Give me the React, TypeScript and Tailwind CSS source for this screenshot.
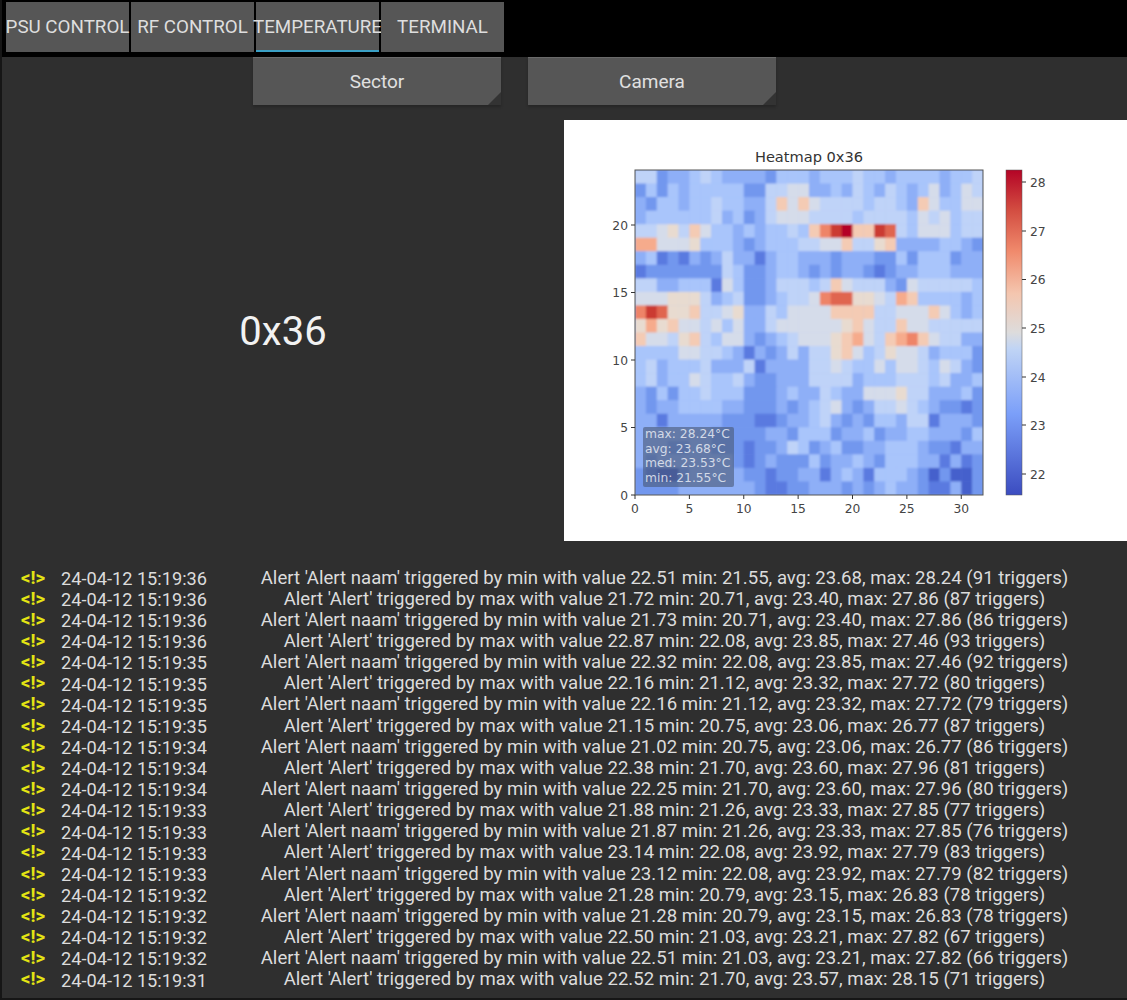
const roboto = 'font-[Roboto,sans-serif]'

const tabs = ['PSU CONTROL', 'RF CONTROL', 'TEMPERATURE', 'TERMINAL']

const logs = [
  ['24-04-12 15:19:36', "Alert 'Alert naam' triggered by min with value 22.51 min: 21.55, avg: 23.68, max: 28.24 (91 triggers)"],
  ['24-04-12 15:19:36', "Alert 'Alert' triggered by max with value 21.72 min: 20.71, avg: 23.40, max: 27.86 (87 triggers)"],
  ['24-04-12 15:19:36', "Alert 'Alert naam' triggered by min with value 21.73 min: 20.71, avg: 23.40, max: 27.86 (86 triggers)"],
  ['24-04-12 15:19:36', "Alert 'Alert' triggered by max with value 22.87 min: 22.08, avg: 23.85, max: 27.46 (93 triggers)"],
  ['24-04-12 15:19:35', "Alert 'Alert naam' triggered by min with value 22.32 min: 22.08, avg: 23.85, max: 27.46 (92 triggers)"],
  ['24-04-12 15:19:35', "Alert 'Alert' triggered by max with value 22.16 min: 21.12, avg: 23.32, max: 27.72 (80 triggers)"],
  ['24-04-12 15:19:35', "Alert 'Alert naam' triggered by min with value 22.16 min: 21.12, avg: 23.32, max: 27.72 (79 triggers)"],
  ['24-04-12 15:19:35', "Alert 'Alert' triggered by max with value 21.15 min: 20.75, avg: 23.06, max: 26.77 (87 triggers)"],
  ['24-04-12 15:19:34', "Alert 'Alert naam' triggered by min with value 21.02 min: 20.75, avg: 23.06, max: 26.77 (86 triggers)"],
  ['24-04-12 15:19:34', "Alert 'Alert' triggered by max with value 22.38 min: 21.70, avg: 23.60, max: 27.96 (81 triggers)"],
  ['24-04-12 15:19:34', "Alert 'Alert naam' triggered by min with value 22.25 min: 21.70, avg: 23.60, max: 27.96 (80 triggers)"],
  ['24-04-12 15:19:33', "Alert 'Alert' triggered by max with value 21.88 min: 21.26, avg: 23.33, max: 27.85 (77 triggers)"],
  ['24-04-12 15:19:33', "Alert 'Alert naam' triggered by min with value 21.87 min: 21.26, avg: 23.33, max: 27.85 (76 triggers)"],
  ['24-04-12 15:19:33', "Alert 'Alert' triggered by max with value 23.14 min: 22.08, avg: 23.92, max: 27.79 (83 triggers)"],
  ['24-04-12 15:19:33', "Alert 'Alert naam' triggered by min with value 23.12 min: 22.08, avg: 23.92, max: 27.79 (82 triggers)"],
  ['24-04-12 15:19:32', "Alert 'Alert' triggered by max with value 21.28 min: 20.79, avg: 23.15, max: 26.83 (78 triggers)"],
  ['24-04-12 15:19:32', "Alert 'Alert naam' triggered by min with value 21.28 min: 20.79, avg: 23.15, max: 26.83 (78 triggers)"],
  ['24-04-12 15:19:32', "Alert 'Alert' triggered by max with value 22.50 min: 21.03, avg: 23.21, max: 27.82 (67 triggers)"],
  ['24-04-12 15:19:32', "Alert 'Alert naam' triggered by min with value 22.51 min: 21.03, avg: 23.21, max: 27.82 (66 triggers)"],
  ['24-04-12 15:19:31', "Alert 'Alert' triggered by max with value 22.52 min: 21.70, avg: 23.57, max: 28.15 (71 triggers)"],
]

// coolwarm levels, one char per cell
const levels: Record<string, string> = {
  '0': '#4560cc',
  '1': '#5a7ae0',
  '2': '#7297ee',
  '3': '#8eaff7',
  '4': '#a9c5fb',
  '5': '#bfd3f8',
  '6': '#d5dcea',
  '7': '#e8dbd0',
  '8': '#f4cbb4',
  '9': '#f6ab8c',
  a: '#ee8468',
  b: '#e0654f',
  c: '#cb3a33',
  d: '#b40426',
}

const grid = [
  '5523345433332444' + '3444544344443445',
  '2424344444225566' + '3343543543463465',
  '3244344544335868' + '6555545543864466',
  '3444444534235666' + '5555455554656455',
  '5567586443434454' + '8acd88cb54666455',
  '9966674443234445' + '5668557833334432',
  '3412132353313443' + '3323332242444233',
  '1222222254223443' + '2323321233444333',
  '5533444164223555' + '4586555326555554',
  '6667775345223455' + '6abb776598444434',
  'acb7785567335466' + '6688885566686434',
  '7978665646335666' + '6667865586655555',
  '8665785466323456' + '667896589a865533',
  '4444665543132353' + '5578645766534442',
  '4534445333513333' + '5565446466546532',
  '4534465445322333' + '5555344455545334',
  '3242445444222343' + '3543366675533342',
  '3233444433222323' + '4563235565432212',
  '3313333322211233' + '4532324435513332',
  '3333333222223324' + '4423342334433324',
  '3332233222122354' + '2342233444322133',
  '3233333332123222' + '4233432444331312',
  '2100233333221223' + '3134314443202002',
  '2222333333321122' + '3332323433211302',
]

const xTicks = [0, 5, 10, 15, 20, 25, 30]
const yTicks = [0, 5, 10, 15, 20]
const barTicks: [string, number][] = [
  ['28', 62],
  ['27', 111],
  ['26', 159.5],
  ['25', 208],
  ['24', 257],
  ['23', 305],
  ['22', 354],
]

function Heatmap() {
  const cw = 348 / 32
  const ch = 325 / 24
  // svg origin sits at the picture's top-left corner (564,120)
  const left = 71
  const top = 50
  return (
    <svg width="563" height="421" viewBox="0 0 563 421" className="block font-[DejaVu_Sans,sans-serif]">
      <defs>
        <linearGradient id="coolwarm" x1="0" y1="1" x2="0" y2="0">
          <stop offset="0" stopColor="#3b4cc0" />
          <stop offset="0.25" stopColor="#7b9ff9" />
          <stop offset="0.45" stopColor="#c0d4f5" />
          <stop offset="0.5" stopColor="#dddcdc" />
          <stop offset="0.62" stopColor="#f4c6af" />
          <stop offset="0.75" stopColor="#f08a6c" />
          <stop offset="0.88" stopColor="#d24b40" />
          <stop offset="1" stopColor="#b40426" />
        </linearGradient>
        <clipPath id="plot">
          <rect x={left} y={top} width="348" height="325" />
        </clipPath>
        <filter id="soft" x="-5%" y="-5%" width="110%" height="110%">
          <feGaussianBlur stdDeviation="0.9" />
        </filter>
      </defs>
      <text x="245" y="42" textAnchor="middle" fontSize="14.6" fill="#333">
        Heatmap 0x36
      </text>
      <g clipPath="url(#plot)">
        <g filter="url(#soft)">
          <rect x={left - 6} y={top - 6} width="360" height="337" fill="#8eaff7" />
          {grid.map((row, r) =>
            row.split('').map((c, i) => (
              <rect
                key={`${r}-${i}`}
                x={left + i * cw}
                y={top + r * ch}
                width={cw + 0.4}
                height={ch + 0.4}
                fill={levels[c]}
              />
            ))
          )}
        </g>
      </g>
      <rect x={left} y={top} width="348" height="325" fill="none" stroke="#555" strokeWidth="1" />
      {xTicks.map((t) => {
        const x = left + t * cw
        return (
          <g key={t}>
            <line x1={x} x2={x} y1="375" y2="379" stroke="#333" />
            <text x={x} y="393" textAnchor="middle" fontSize="12.3" fill="#444">
              {t}
            </text>
          </g>
        )
      })}
      {yTicks.map((t) => {
        const y = 375 - t * 13.5
        return (
          <g key={t}>
            <line x1={left - 4} x2={left} y1={y} y2={y} stroke="#333" />
            <text x={left - 7} y={y + 4.5} textAnchor="end" fontSize="12.3" fill="#444">
              {t}
            </text>
          </g>
        )
      })}
      <rect x="442" y="50" width="16" height="325" fill="url(#coolwarm)" stroke="#555" strokeWidth="0.5" />
      {barTicks.map(([label, y]) => (
        <g key={label}>
          <line x1="458" x2="462" y1={y} y2={y} stroke="#333" />
          <text x="466" y={y + 4.5} fontSize="12.3" fill="#444">
            {label}
          </text>
        </g>
      ))}
      <rect x="79" y="307" width="91" height="60" rx="2" fill="#4a5a78" fillOpacity="0.62" />
      <g fontSize="12.3" fill="#e8ecf4" fillOpacity="0.85">
        <text x="81" y="318">max: 28.24°C</text>
        <text x="81" y="333">avg: 23.68°C</text>
        <text x="81" y="347">med: 23.53°C</text>
        <text x="81" y="362">min: 21.55°C</text>
      </g>
    </svg>
  )
}

function Tab({ label, active }: { label: string; active: boolean }) {
  return (
    <div className="relative flex h-[50px] w-[123px] items-center justify-center whitespace-nowrap bg-[#565656] text-[18.8px] text-[#dedede]">
      {label}
      {active && <div className="absolute bottom-0 left-0 right-0 h-[2px] bg-[#3a9fc4]" />}
    </div>
  )
}

function ActionButton({ label }: { label: string }) {
  return (
    <div className="relative flex h-[48px] w-[248px] items-center justify-center border-t border-[#6a6a6a] bg-[#565656] pt-[1px] text-[19px] text-[#e0e0e0] shadow-[0_2px_2px_#262626]">
      {label}
      <div className="absolute bottom-0 right-0 h-[13px] w-[13px] bg-[#333333] [clip-path:polygon(100%_0,100%_100%,0_100%)]" />
    </div>
  )
}

export default function App() {
  return (
    <div className={`flex h-[1000px] w-[1127px] flex-col overflow-hidden border-b-2 border-l-2 border-[#161616] bg-[#2f2f2f] ${roboto}`}>
      <div className="flex h-[57px] shrink-0 gap-[2px] bg-black pl-[4px] pt-[2px]">
        {tabs.map((t) => (
          <Tab key={t} label={t} active={t === 'TEMPERATURE'} />
        ))}
      </div>

      <div className="flex shrink-0 gap-[27px] pl-[251px]">
        <ActionButton label="Sector" />
        <ActionButton label="Camera" />
      </div>

      <div className="mt-[15px] flex h-[421px] shrink-0">
        <div className="flex w-[562px] items-center justify-center pt-[2px] text-[40px] text-[#f2f2f2]">0x36</div>
        <div className="w-[563px] bg-white">
          <Heatmap />
        </div>
      </div>

      <div className="flex flex-col pt-[27px]">
        {logs.map(([time, msg], i) => (
          <div key={i} className="flex h-[21.15px] items-center whitespace-nowrap text-[#dcdcdc]">
            <div className="w-[62px] text-center text-[18.6px] font-bold text-[#e4e414]">{'<!>'}</div>
            <div className="flex w-[140px] justify-center text-[18.2px]">{time}</div>
            <div className="flex w-[921px] justify-center text-[18.6px]">{msg}</div>
          </div>
        ))}
      </div>
    </div>
  )
}
